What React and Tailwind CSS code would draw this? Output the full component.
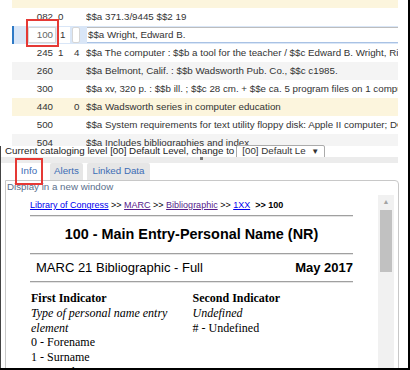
import React from 'react'

const rows = [
  { tag: '050', i1: '0', i2: '0', text: '$$a LB1028.5 $$b .W75 1985', bg: 'bg-[#fcf5dd]', top: true },
  { tag: '082', i1: '0', i2: '', text: '$$a 371.3/9445 $$2 19', bg: 'bg-white' },
  { sel: true },
  { tag: '245', i1: '1', i2: '4', text: '$$a The computer : $$b a tool for the teacher / $$c Edward B. Wright, Richard A. Forcier.', bg: 'bg-white' },
  { tag: '260', i1: '', i2: '', text: '$$a Belmont, Calif. : $$b Wadsworth Pub. Co., $$c c1985.', bg: 'bg-[#f4f4f4]' },
  { tag: '300', i1: '', i2: '', text: '$$a xv, 320 p. : $$b ill. ; $$c 28 cm. + $$e ca. 5 program files on 1 computer disk.', bg: 'bg-white' },
  { tag: '440', i1: '', i2: '0', text: '$$a Wadsworth series in computer education', bg: 'bg-[#fcf5dd]' },
  { tag: '500', i1: '', i2: '', text: '$$a System requirements for text utility floppy disk: Apple II computer; DOS 3.3.', bg: 'bg-white' },
  { tag: '504', i1: '', i2: '', text: '$$a Includes bibliographies and index.', bg: 'bg-[#f4f4f4]' },
]

function Row({ r }) {
  if (r.sel) {
    return (
      <div className="flex h-[18px] items-center overflow-hidden border-l-2 border-[#2f7ac6] bg-[#d9e6f7] pl-[14px]">
        <div className="flex h-[16px] w-[28px] items-center justify-end border border-[#d6d6d6] bg-white pr-[2px] text-[#666]">100</div>
        <div className="ml-[3px] flex h-[16px] w-[11px] items-center bg-white pl-[1px]">1</div>
        <div className="ml-[2px] h-[16px] w-[8px] rounded-[2px] border border-[#d6d6d6] bg-white" />
        <div className="ml-[7px] flex h-[16px] min-w-0 flex-1 items-center overflow-hidden whitespace-nowrap border-t border-b border-t-[#bdbdbd] border-b-[#a9c2e4] bg-white pl-[1px]">
          $$a Wright, Edward B.
        </div>
      </div>
    )
  }
  return (
    <div className={`flex h-[18px] items-center overflow-hidden whitespace-nowrap ${r.bg}`}>
      <div className={`flex min-w-0 flex-1 items-center ${r.top ? 'relative -top-[3px]' : ''}`}>
        <div className="w-[41px] shrink-0 text-right">{r.tag}</div>
        <div className="w-[19px] shrink-0 pl-[5px]">{r.i1}</div>
        <div className="w-[14px] shrink-0 pl-[2px]">{r.i2}</div>
        <div className="min-w-0 flex-1 overflow-hidden">{r.text}</div>
      </div>
    </div>
  )
}

function Hr() {
  return <div className="h-[2px] border-t border-b border-t-[#a0a0a0] border-b-[#e4e4e4]" />
}

export default function App() {
  return (
    <div className="relative h-[370px] w-[410px] overflow-hidden border-r-2 border-b-2 border-black bg-white font-['Liberation_Sans',Arial,sans-serif] text-[#333]">
      {/* record editor */}
      <div className="h-[146px] overflow-hidden pl-[12px] pr-[10px] text-[9.75px]">
        <div className="-mt-[10px] w-[386px]">
          {rows.map((r, i) => <Row key={i} r={r} />)}
        </div>
      </div>

      <div className="border-l border-[#444]">
        <div className="relative flex h-[11px] items-center whitespace-nowrap pl-[4px] text-[9.75px] text-[#222]">
          <span>Current cataloging level [00] Default Level, change to</span>
          <div className="ml-[2px] flex h-[14px] w-[89px] items-center overflow-hidden rounded-[2px] border border-[#ababab] bg-white pl-[5px]">
            <span className="w-[66px] overflow-hidden text-[#333]">[00] Default Le</span>
            <span className="ml-[3px] text-[8px] text-[#333]">▼</span>
          </div>
        </div>
        <div className="relative mr-[10px] h-[6px] bg-[#ececec]">
          <div className="absolute left-[199px] top-0 h-[3px] w-[3px] bg-[#777]" />
        </div>

        <div className="flex h-[17px] items-stretch pl-[16px] text-[9.75px] text-[#3d6db5]">
          <div className="flex w-[24px] items-center justify-center">Info</div>
          <div className="ml-[9px] flex w-[33px] items-center justify-center rounded-t-[2px] bg-[#e6e6e6]">Alerts</div>
          <div className="ml-[4px] flex w-[63px] items-center justify-center rounded-t-[2px] bg-[#e6e6e6]">Linked Data</div>
        </div>

        <div className="ml-[4px] mr-[9px] h-[200px] rounded-tr-[4px] border border-[#c8c8c8]">
          <div className="h-[12px] pl-[1px] text-[9.75px] leading-[12px] text-[#5b6f8c]">Display in a new window</div>
          <div className="ml-[16px] mr-[3px] mt-[2px] flex h-[190px]">
            <div className="w-[356px] pl-[8px] pt-[5px]">
              <div className="w-[323px]">
                <div className="h-[11px] whitespace-nowrap text-[9px] leading-[11px] text-black">
                  <a className="text-[#0000ee] underline">Library of Congress</a> &gt;&gt;{' '}
                  <a className="text-[#551a8b] underline">MARC</a> &gt;&gt;{' '}
                  <a className="text-[#551a8b] underline">Bibliographic</a> &gt;&gt;{' '}
                  <a className="text-[#0000ee] underline">1XX</a>{'  '}&nbsp;<b>&gt;&gt; 100</b>
                </div>
                <div className="mt-[4px]"><Hr /></div>
                <div className="flex h-[36px] items-center justify-center whitespace-nowrap text-[14.4px] font-bold text-black">
                  100 - Main Entry-Personal Name (NR)
                </div>
                <Hr />
                <div className="flex h-[26px] items-center justify-between whitespace-nowrap pl-[6px] text-[13px] text-black">
                  <span>MARC 21 Bibliographic - Full</span>
                  <b>May 2017</b>
                </div>
                <Hr />
                <div className="mt-[8px] grid grid-cols-2 font-['Liberation_Serif','Times_New_Roman',serif] text-[12px] leading-[14.75px] text-black">
                  <div className="pl-[1px] pr-[8px]">
                    <div className="font-bold">First Indicator</div>
                    <div className="italic">Type of personal name entry element</div>
                    <div>0 - Forename</div>
                    <div>1 - Surname</div>
                    <div>3 - Family name</div>
                  </div>
                  <div className="pl-[1px]">
                    <div className="font-bold">Second Indicator</div>
                    <div className="italic">Undefined</div>
                    <div># - Undefined</div>
                  </div>
                </div>
              </div>
            </div>
            <div className="flex w-[16px] flex-col bg-[#f1f1f1]">
              <div className="flex h-[15px] items-center justify-center text-[7px] text-[#a3a3a3]">▲</div>
              <div className="mx-[2px] h-[62px] bg-[#c1c1c1]" />
            </div>
          </div>
        </div>
      </div>

      {/* annotation boxes */}
      <div className="absolute left-[26px] top-[19px] h-[28px] w-[33px] border-2 border-[#e53935]" />
      <div className="absolute left-[15px] top-[158px] h-[27px] w-[28px] border-2 border-[#e53935]" />
    </div>
  )
}
